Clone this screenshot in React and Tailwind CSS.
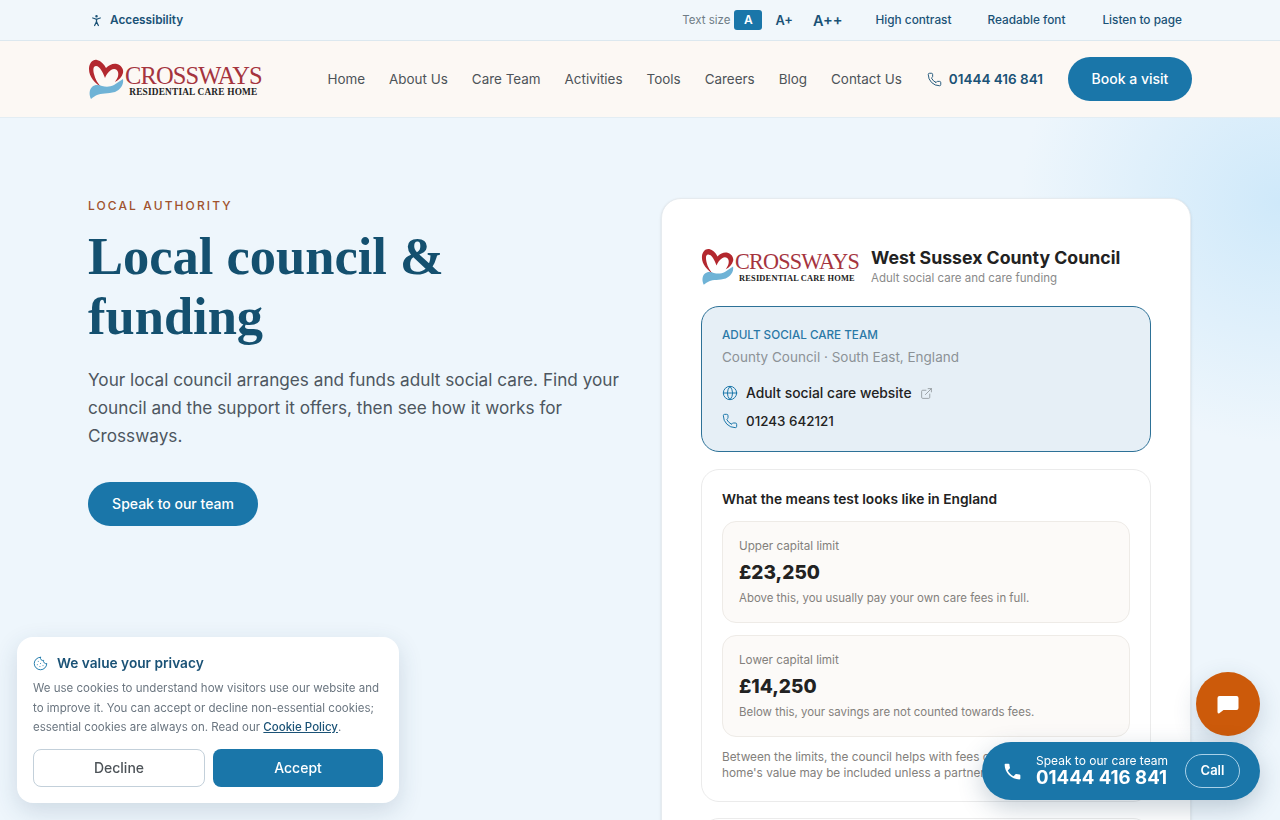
import { Cookie, ExternalLink, Globe, Phone, PersonStanding } from "lucide-react"
import { MdPhone } from "react-icons/md"

const navLinks = ["Home", "About Us", "Care Team", "Activities", "Tools", "Careers", "Blog", "Contact Us"]

/* Heart + hand mark with the wordmark set as real text */
function Logo({ small = false }) {
  return (
    <div className={`flex items-center ${small ? "w-[159px]" : "w-[175px]"} shrink-0`}>
      <svg viewBox="0 0 36 40" className={`${small ? "w-[33px] h-[37px]" : "w-[36px] h-[40px]"} shrink-0`}>
        <path fillRule="evenodd" d="M14 29C7 24 1 18 1 10C1 4 5 0 9 1C13 2 16 5 18 9C21 6 25 4 29 5C33 6 36 10 35 14C34 18 31 21 27 23C29 20 31 17 30 13C29 10 26 9 23 11C20 13 18 16 17 19C15 14 12 7 8 7C5 7 5 11 6 15C7 20 10 25 14 29Z" fill="#b3282f" />
        <path d="M3 40C1 36 1 31 4 28C7 25 11 26 14 27C18 28 22 28 26 26C29 24 32 22 35 20C36 26 32 31 27 33C20 35 13 34 9 36C7 37 5 38 3 40Z" fill="#6fb3d6" />
      </svg>
      <div className={`${small ? "" : "mt-[3px]"} ml-[1px] flex flex-col items-center font-['Liberation_Serif',serif]`}>
        <span className={`${small ? "text-[22.200px] tracking-[-0.8px]" : "text-[24.500px] tracking-[-0.9px]"} leading-[24px] text-[#a5343e]`}>CROSSWAYS</span>
        <span className={`${small ? "text-[8.400px]" : "text-[9.300px]"} font-bold leading-[9px] tracking-[0.2px] whitespace-nowrap text-[#222]`}>RESIDENTIAL CARE HOME</span>
      </div>
    </div>
  )
}

function LimitCard({ label, amount, note }) {
  return (
    <div className="h-[102px] rounded-[14px] border border-[#eeebe7] bg-[#fcfaf8] px-4 pt-[15px]">
      <p className="text-[11.700px] leading-[18px] text-[#83807c]">{label}</p>
      <p className="mt-[4px] text-[19px] leading-[28px] font-extrabold text-[#222]">{amount}</p>
      <p className="mt-[2px] text-[11.450px] leading-[18px] text-[#83807c]">{note}</p>
    </div>
  )
}

export default function App() {
  return (
    <div className="relative h-[820px] overflow-hidden bg-[#eef6fc] font-['Inter',sans-serif] text-[#333]">

      {/* Top Bar */}
      <div className="h-[41px] border-b border-[#dce8ef] bg-[#f1f7fb]">
        <div className="mx-auto flex h-10 w-[1104px] items-center justify-between pt-[1px]">
          <div className="flex items-center gap-[6px] pl-[1px] text-[#1a5276]">
            <PersonStanding size={15} />
            <span className="text-[11.800px] font-semibold">Accessibility</span>
          </div>
          <div className="flex items-center pr-[10px] text-[11.800px] font-medium text-[#1a5276]">
            <span className="mr-[4px] text-[11.500px] font-normal text-[#6f7d86]">Text size</span>
            <span className="-mt-[1px] flex h-5 w-[28px] items-center justify-center rounded-[3px] bg-[#1a76a9] text-[12px] font-semibold text-white">A</span>
            <span className="ml-[13px] text-[12.800px] font-semibold">A+</span>
            <span className="ml-[20px] text-[14.500px] font-semibold">A++</span>
            <span className="ml-[33px]">High contrast</span>
            <span className="ml-[36px]">Readable font</span>
            <span className="ml-[37px]">Listen to page</span>
          </div>
        </div>
      </div>

      {/* Main Nav */}
      <div className="h-[77px] border-b border-[#e3edf3] bg-[#fcf8f4]">
        <div className="mx-auto flex h-[76px] w-[1104px] items-center justify-between">
          <Logo />
          <div className="flex items-center">
            <nav className="flex items-center gap-[24px] text-[13.450px] text-[#4d5358]">
              {navLinks.map((link) => (
                <span key={link}>{link}</span>
              ))}
            </nav>
            <div className="ml-[25px] flex items-center gap-[7px] text-[#1a5276]">
              <Phone size={15} strokeWidth={1.5} />
              <span className="text-[13.500px] font-semibold">01444 416 841</span>
            </div>
            <button className="ml-[25px] h-11 w-[124px] rounded-full bg-[#1a76a9] pb-[1px] text-[14px] font-medium text-white">Book a visit</button>
          </div>
        </div>
      </div>

      {/* Hero */}
      <div className="relative h-[702px] bg-[radial-gradient(ellipse_260px_240px_at_100%_12%,#cfe9fa_0%,#e0f0fb_55%,#eef6fc_100%)]">
        <div className="mx-auto grid w-[1104px] grid-cols-[1fr_530px] gap-[43px] pt-[80px]">
          <div>
            <p className="text-[12px] leading-[16px] font-medium tracking-[2.100px] text-[#a0522d]">LOCAL AUTHORITY</p>
            <h1 className="mt-[12px] font-['Liberation_Serif',serif] text-[52.500px] leading-[60px] font-bold text-[#14506f]">Local council &amp;<br />funding</h1>
            <p className="mt-[20px] text-[17.200px] leading-[28px] text-[#4d5660]">Your local council arranges and funds adult social care. Find your council and the support it offers, then see how it works for Crossways.</p>
            <button className="mt-[32px] h-11 w-[170px] rounded-full bg-[#1a76a9] pb-[1px] text-[14px] font-medium text-white">Speak to our team</button>
          </div>

          {/* Council Card */}
          <div className="-ml-[1px] mr-[1px] h-[700px] rounded-[20px] border border-[#e6ebef] bg-white px-[39px] pt-[47px] shadow-sm">
            <div className="flex items-center gap-[11px]">
              <Logo small />
              <div>
                <p className="text-[17.700px] leading-[24px] font-bold text-[#222]">West Sussex County Council</p>
                <p className="text-[11.500px] leading-[16px] text-[#8a8a8a]">Adult social care and care funding</p>
              </div>
            </div>

            <div className="mt-[20px] h-[146px] rounded-[18px] border border-[#2d7197] bg-[#e6eff6] px-5 pt-[19px]">
              <p className="text-[11.700px] leading-[18px] font-medium text-[#2a78a6]">ADULT SOCIAL CARE TEAM</p>
              <p className="mt-[2px] text-[13.500px] leading-[22px] text-[#8c9296]">County Council · South East, England</p>
              <div className="mt-[15px] flex items-center gap-2 text-[13.850px] leading-[20px] font-medium text-[#222]">
                <Globe size={16} strokeWidth={1.5} className="text-[#1a76a9]" />
                <span>Adult social care website</span>
                <ExternalLink size={13} strokeWidth={1.5} className="text-[#8c9296]" />
              </div>
              <div className="mt-2 flex items-center gap-2 text-[13.400px] leading-[20px] font-medium text-[#222]">
                <Phone size={16} strokeWidth={1.5} className="text-[#1a76a9]" />
                <span>01243 642121</span>
              </div>
            </div>

            <div className="mt-[17px] h-[333px] rounded-[18px] border border-[#ebebeb] bg-white px-5 pt-[19px]">
              <p className="text-[13.750px] leading-[20px] font-semibold text-[#222]">What the means test looks like in England</p>
              <div className="mt-[12px] flex flex-col gap-3">
                <LimitCard label="Upper capital limit" amount="£23,250" note="Above this, you usually pay your own care fees in full." />
                <LimitCard label="Lower capital limit" amount="£14,250" note="Below this, your savings are not counted towards fees." />
              </div>
              <p className="mt-[12px] text-[11.800px] leading-[16px] text-[#83807c]">Between the limits, the council helps with fees on a sliding scale. Your<br />home's value may be included unless a partner still lives there.</p>
            </div>

            <div className="mt-[16px] h-[100px] rounded-[18px] border border-[#ebebeb] bg-white" />
          </div>
        </div>
      </div>

      {/* Cookie Banner */}
      <div className="fixed bottom-[17px] left-[17px] h-[166px] w-[382px] rounded-[16px] bg-white px-4 pt-4 shadow-[0_8px_24px_rgba(40,70,100,0.16)]">
        <div className="flex items-center gap-[9px]">
          <Cookie size={15} strokeWidth={1.5} className="text-[#1a76a9]" />
          <p className="text-[13.700px] leading-[20px] font-semibold text-[#1a5276]">We value your privacy</p>
        </div>
        <p className="mt-[6px] text-[11.500px] leading-[19.500px] text-[#6b7680]">
          We use cookies to understand how visitors use our website and to improve it. You can accept or decline non-essential cookies; essential cookies are always on. Read our <span className="font-medium text-[#1a5276] underline">Cookie Policy</span>.
        </p>
        <div className="mt-[11px] flex gap-2">
          <button className="h-[38px] w-[172px] rounded-[8px] border border-[#c3d0da] bg-white text-[14px] font-medium text-[#4d5358]">Decline</button>
          <button className="h-[38px] w-[170px] rounded-[8px] bg-[#1a76a9] text-[14px] font-medium text-white">Accept</button>
        </div>
      </div>

      {/* Chat Button */}
      <button className="fixed right-[20px] bottom-[84px] flex h-16 w-16 items-center justify-center rounded-full bg-[#cc5a0a] shadow-[0_8px_24px_rgba(40,70,100,0.2)]">
        <svg viewBox="0 0 24 24" className="h-[24px] w-[24px]" fill="#fff">
          <path d="M3.500 4h17a2 2 0 0 1 2 2v10a2 2 0 0 1-2 2H7.500L3 21.500A1.500 1.500 0 0 1 1.500 20V6a2 2 0 0 1 2-2Z" />
        </svg>
      </button>

      {/* Call Pill */}
      <div className="fixed right-[20px] bottom-[20px] flex h-[58px] w-[278px] items-center rounded-full bg-[#1a76a9] pl-[20px] text-white shadow-[0_8px_24px_rgba(40,70,100,0.25)]">
        <MdPhone size={21} />
        <div className="-mt-[2px] ml-[13px] flex flex-col">
          <span className="text-[12px] leading-[13px]">Speak to our care team</span>
          <span className="text-[18.600px] leading-[20px] font-bold">01444 416 841</span>
        </div>
        <span className="ml-[17px] flex h-[34px] w-[55px] items-center justify-center rounded-full border border-[#a9d1e8] text-[13px] font-semibold">Call</span>
      </div>
    </div>
  )
}
